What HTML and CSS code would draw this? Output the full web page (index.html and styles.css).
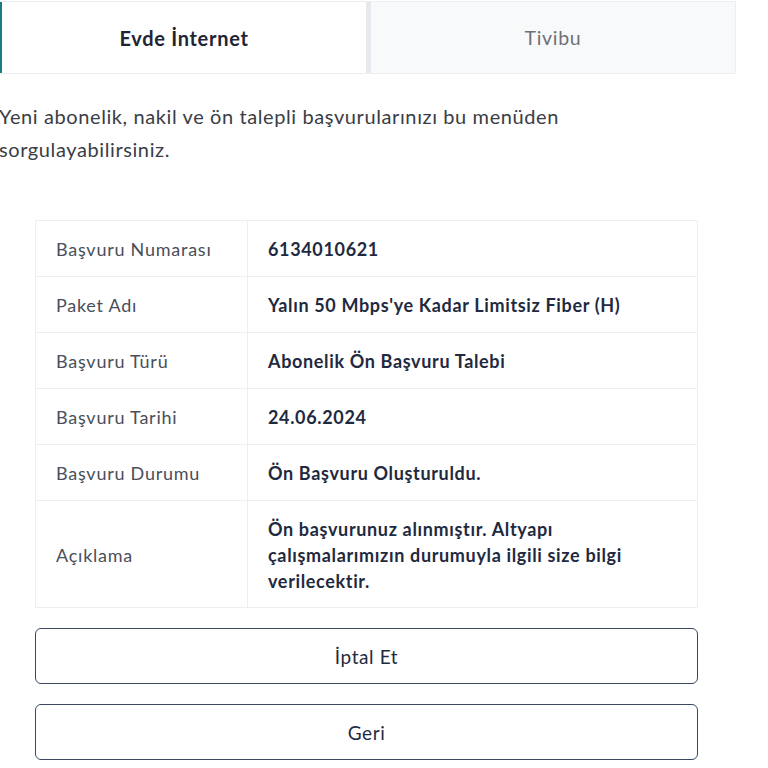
FILE: index.html
```html
<!DOCTYPE html>
<html lang="tr">
<head>
<meta charset="utf-8">
<title>Başvuru Sorgulama</title>
<link rel="stylesheet" href="styles.css">
</head>
<body>
<div class="page">
  <div class="tabs">
    <div class="tab tab-active">Evde İnternet</div>
    <div class="tab tab-inactive">Tivibu</div>
  </div>
  <p class="intro">Yeni abonelik, nakil ve ön talepli başvurularınızı bu menüden sorgulayabilirsiniz.</p>
  <div class="details">
    <div class="row"><div class="label">Başvuru Numarası</div><div class="value">6134010621</div></div>
    <div class="row"><div class="label">Paket Adı</div><div class="value">Yalın 50 Mbps'ye Kadar Limitsiz Fiber (H)</div></div>
    <div class="row"><div class="label">Başvuru Türü</div><div class="value">Abonelik Ön Başvuru Talebi</div></div>
    <div class="row"><div class="label">Başvuru Tarihi</div><div class="value">24.06.2024</div></div>
    <div class="row"><div class="label">Başvuru Durumu</div><div class="value">Ön Başvuru Oluşturuldu.</div></div>
    <div class="row"><div class="label">Açıklama</div><div class="value">Ön başvurunuz alınmıştır. Altyapı çalışmalarımızın durumuyla ilgili size bilgi verilecektir.</div></div>
  </div>
  <div class="actions">
    <button class="btn">İptal Et</button>
    <button class="btn">Geri</button>
  </div>
</div>
</body>
</html>
```

FILE: styles.css
```css
* { box-sizing: border-box; }
html, body { margin: 0; padding: 0; background: #ffffff; }
body {
  font-family: Lato, "Noto Sans", "Liberation Sans", sans-serif;
  color: #1f2a40;
}
.page {
  width: 736px;
}
.tabs {
  display: flex;
  margin-top: 1px;
  height: 73px;
  border-top: 1px solid #eceef1;
  border-bottom: 1px solid #eceef1;
}
.tab {
  flex: 1 1 0;
  display: flex;
  align-items: center;
  justify-content: center;
  font-size: 20px;
  letter-spacing: 0.7px;
}
.tab-active {
  background: #ffffff;
  border-left: 2px solid #1c7c84;
  font-weight: 700;
  color: #1f2535;
}
.tab-inactive {
  background: #f8f9fb;
  border-left: 5px solid #e6e9ed;
  border-right: 1px solid #eceef1;
  color: #6e7075;
  font-size: 19.5px;
}
.intro {
  margin: 26px 0 0 -1px;
  padding-right: 150px;
  font-size: 20px;
  letter-spacing: 0.6px;
  line-height: 33px;
  color: #3a3d44;
}
.details {
  margin: 54px 0 0 35px;
  width: 663px;
  border: 1px solid #eceef0;
}
.row {
  display: grid;
  grid-template-columns: 212px 1fr;
  border-top: 1px solid #eceef0;
}
.row:first-child { border-top: none; }
.label {
  display: flex;
  align-items: center;
  padding: 15px 20px 14px;
  font-size: 18px;
  letter-spacing: 0.75px;
  line-height: 26px;
  color: #4a4f5a;
  border-right: 1px solid #eceef0;
}
.value {
  padding: 15px 40px 14px 20px;
  font-size: 18px;
  letter-spacing: 0.65px;
  line-height: 26px;
  font-weight: 700;
  color: #1f2a40;
}
.row:last-child .label,
.row:last-child .value {
  padding-bottom: 13px;
}
.actions {
  margin: 20px 0 0 35px;
  width: 663px;
  display: flex;
  flex-direction: column;
  gap: 20px;
}
.btn {
  height: 56px;
  width: 100%;
  background: #ffffff;
  border: 1.5px solid #3a4a5e;
  border-radius: 6px;
  font-family: Lato, "Noto Sans", "Liberation Sans", sans-serif;
  font-size: 19px;
  letter-spacing: 0.6px;
  color: #1f2a40;
}
```
